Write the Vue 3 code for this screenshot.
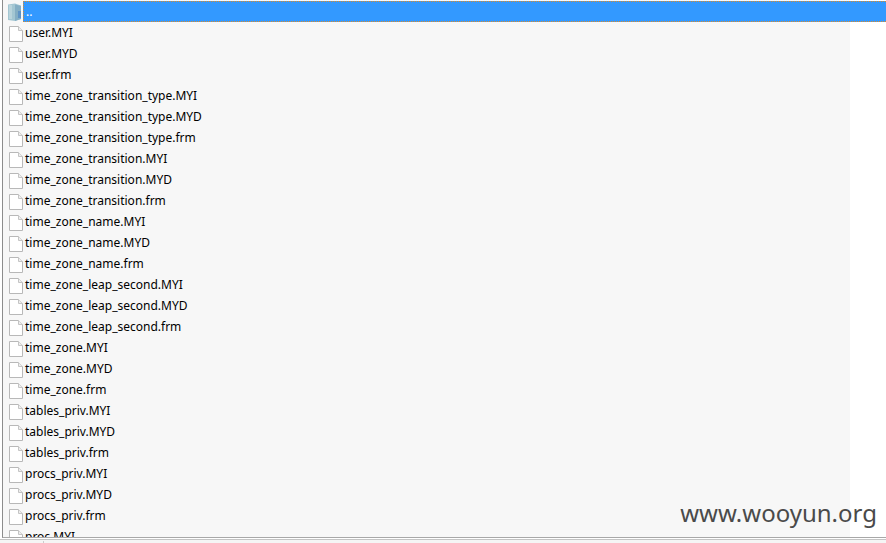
<template>
  <div class="window">
    <div class="list">
      <div
        v-for="(name, i) in files"
        :key="name + i"
        class="row"
        :class="{ selected: i === 0 }"
      >
        <svg v-if="i === 0" class="icon" width="16" height="20" viewBox="0 0 16 20">
          <path d="M0 2.500l7-1 6 2v13.500l-6 2-7-1z" fill="#a3c6d2" />
          <path d="M7 2.500l6 1.500v13l-6 2z" fill="#84aec4" />
          <path d="M1 3h3v14H1z" fill="#b9d4dc" />
          <path d="M10 9h3v7h-3z" fill="#5f93c4" />
        </svg>
        <svg v-else class="icon" width="16" height="20" viewBox="0 0 16 20">
          <path d="M1.500 3.500h9l4 4v11h-13z" fill="#fff" stroke="#b8b8b8" />
          <path d="M10.500 3.500v4h4" fill="#eeeeee" stroke="#c4c4c4" />
        </svg>
        <span class="name">{{ name }}</span>
      </div>
    </div>
    <div class="status">
      <span class="divider"></span>
    </div>
    <div class="watermark">www.wooyun.org</div>
  </div>
</template>

<script setup>
const files = [
  '..',
  'user.MYI',
  'user.MYD',
  'user.frm',
  'time_zone_transition_type.MYI',
  'time_zone_transition_type.MYD',
  'time_zone_transition_type.frm',
  'time_zone_transition.MYI',
  'time_zone_transition.MYD',
  'time_zone_transition.frm',
  'time_zone_name.MYI',
  'time_zone_name.MYD',
  'time_zone_name.frm',
  'time_zone_leap_second.MYI',
  'time_zone_leap_second.MYD',
  'time_zone_leap_second.frm',
  'time_zone.MYI',
  'time_zone.MYD',
  'time_zone.frm',
  'tables_priv.MYI',
  'tables_priv.MYD',
  'tables_priv.frm',
  'procs_priv.MYI',
  'procs_priv.MYD',
  'procs_priv.frm',
  'proc.MYI'
]
</script>

<style>
html, body { margin: 0; background: #fff; overflow: hidden; }
</style>

<style scoped>
.window {
  position: relative;
  width: 886px;
  height: 543px;
  overflow: hidden;
  background: #fff;
  font-family: "Noto Sans", "Noto Sans CJK SC", sans-serif;
}
.list {
  height: 538px;
  margin-left: 2px;
  padding-top: 1px;
  box-sizing: border-box;
  overflow: hidden;
  border-left: 1px solid #8c8c8c;
  border-bottom: 1px solid #a8a8a8;
  background: linear-gradient(90deg, #f7f7f7 847px, #fff 847px);
}
.row {
  display: flex;
  align-items: center;
  height: 21px;
  padding-left: 5px;
  font-size: 12px;
  color: #000;
}
.icon { flex: none; }
.name { padding-left: 1px; }
.selected .name {
  flex: 1;
  height: 21px;
  line-height: 19px;
  box-sizing: border-box;
  margin-left: -1px;
  padding-left: 2px;
  background: #3399ff;
  color: #fff;
  border-top: 1px dotted #d98a2b;
  border-bottom: 1px dotted #d98a2b;
  border-left: 1px dotted #d98a2b;
}
.status {
  height: 5px;
  padding-top: 1px;
  margin-top: 1px;
  border-top: 1px solid #c4c4c4;
  box-sizing: border-box;
  background: #f5f5f5;
}
.divider {
  display: block;
  width: 1px;
  height: 3px;
  margin-left: 43px;
  background: #ccc;
}
.watermark {
  position: absolute;
  right: 9px;
  bottom: 14px;
  font-size: 24px;
  color: #4a4a4a;
}
</style>
